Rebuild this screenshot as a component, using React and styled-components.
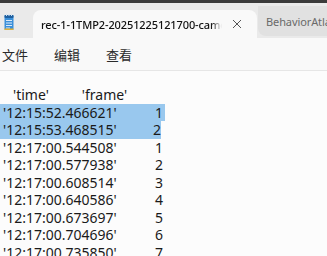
import React from 'react'
import styled, { createGlobalStyle } from 'styled-components'

const GlobalStyle = createGlobalStyle`
  html, body {
    margin: 0;
    padding: 0;
    background: #fbfbfb;
  }
  body {
    font-family: "Noto Sans", "Noto Sans CJK SC", sans-serif;
  }
`

const rows = [
  { time: "'12:15:52.466621'", frame: 1, sel: 165 },
  { time: "'12:15:53.468515'", frame: 2, sel: 161 },
  { time: "'12:17:00.544508'", frame: 1 },
  { time: "'12:17:00.577938'", frame: 2 },
  { time: "'12:17:00.608514'", frame: 3 },
  { time: "'12:17:00.640586'", frame: 4 },
  { time: "'12:17:00.673697'", frame: 5 },
  { time: "'12:17:00.704696'", frame: 6 },
  { time: "'12:17:00.735850'", frame: 7 },
]

const NotepadIcon = () => (
  <svg width="10" height="16" viewBox="0 0 10 16">
    <rect x="0.5" y="1" width="9" height="15" rx="1" fill="#3a8fd9" />
    <rect x="0.5" y="1" width="9" height="3" rx="1" fill="#1f5f9e" />
    <rect x="2" y="0" width="1" height="2" fill="#cfe3f5" />
    <rect x="4.5" y="0" width="1" height="2" fill="#cfe3f5" />
    <rect x="7" y="0" width="1" height="2" fill="#cfe3f5" />
    <rect x="2" y="6" width="6" height="1" fill="#dbeaf8" />
    <rect x="2" y="8.5" width="6" height="1" fill="#dbeaf8" />
    <rect x="2" y="11" width="6" height="1" fill="#dbeaf8" />
    <rect x="2" y="13.5" width="4" height="1" fill="#dbeaf8" />
    <rect x="0.5" y="14.5" width="9" height="1.5" fill="#e0b13a" />
  </svg>
)

export default function App() {
  return (
    <Window>
      <GlobalStyle />
      <TopStrip />
      <TitleBar>
        <IconSlot>
          <NotepadIcon />
        </IconSlot>
        <ActiveTab>
          <TabTitle>rec-1-1TMP2-20251225121700-camera</TabTitle>
          <CloseBtn>
            <svg width="10" height="10" viewBox="0 0 10 10">
              <path d="M1 1 L9 9 M9 1 L1 9" stroke="#555" strokeWidth="1" />
            </svg>
          </CloseBtn>
        </ActiveTab>
        <InactiveTab>
          <TabTitle $dim>BehaviorAtlas</TabTitle>
        </InactiveTab>
      </TitleBar>
      <MenuBar>
        <MenuItem>文件</MenuItem>
        <MenuItem>编辑</MenuItem>
        <MenuItem>查看</MenuItem>
      </MenuBar>
      <Editor>
        <HeaderLine>
          <span>'time'</span>
          <span>'frame'</span>
        </HeaderLine>
        {rows.map((r, i) => (
          <Line key={i} $sel={r.sel}>
            <TimeCell>{r.time}</TimeCell>
            <FrameCell>{r.frame}</FrameCell>
          </Line>
        ))}
      </Editor>
    </Window>
  )
}

const Window = styled.div`
  width: 327px;
  height: 256px;
  overflow: hidden;
  display: flex;
  flex-direction: column;
  background: #fbfbfb;
`

const TopStrip = styled.div`
  height: 3px;
  background: #3b3b3b;
  flex-shrink: 0;
`

const TitleBar = styled.div`
  height: 35px;
  flex-shrink: 0;
  display: flex;
  align-items: flex-end;
  background: #eaeaea;
`

const IconSlot = styled.div`
  width: 33px;
  flex-shrink: 0;
  height: 100%;
  display: flex;
  align-items: center;
  padding-left: 4px;
  padding-top: 3px;
  box-sizing: border-box;
`

const ActiveTab = styled.div`
  width: 224px;
  flex-shrink: 0;
  height: 28px;
  display: flex;
  align-items: center;
  padding: 0 15px 0 8px;
  box-sizing: border-box;
  background: #f9f9f9;
  border-radius: 8px 8px 0 0;
`

const TabTitle = styled.div`
  flex: 1;
  min-width: 0;
  overflow: hidden;
  white-space: nowrap;
  font-size: 11px;
  letter-spacing: -0.1px;
  font-weight: ${p => (p.$dim ? 400 : 500)};
  color: ${p => (p.$dim ? '#6a6a6a' : '#111')};
  mask-image: ${p => (p.$dim ? 'none' : 'linear-gradient(to right, #000 94%, transparent)')};
`

const CloseBtn = styled.div`
  width: 20px;
  flex-shrink: 0;
  display: flex;
  justify-content: flex-end;
  align-items: center;
`

const InactiveTab = styled.div`
  flex: 1;
  min-width: 0;
  height: 30px;
  align-self: flex-start;
  margin-top: 3px;
  display: flex;
  align-items: center;
  padding-left: 8px;
  margin-left: 1px;
  background: #e1e1e1;
  border-radius: 0 0 0 8px;
`

const MenuBar = styled.div`
  height: 32px;
  flex-shrink: 0;
  display: flex;
  align-items: center;
  gap: 26px;
  padding-left: 2px;
  background: #f9f9f9;
  border-bottom: 1px solid #e6e6e6;
`

const MenuItem = styled.div`
  font-family: "Noto Sans CJK SC", sans-serif;
  font-size: 13px;
  color: #2a2a2a;
`

const Editor = styled.div`
  flex: 1;
  padding-top: 15px;
  background: #fcfcfc;
  font-family: "Noto Sans", sans-serif;
  font-size: 14px;
  color: #1a1a1a;
`

const HeaderLine = styled.div`
  height: 17.5px;
  line-height: 17.5px;
  display: flex;
  gap: 33px;
  padding-left: 13px;
`

const Line = styled.div`
  height: 17.5px;
  line-height: 17.5px;
  display: flex;
  padding-left: 3px;
  box-sizing: border-box;
  width: ${p => (p.$sel ? `${p.$sel}px` : 'auto')};
  background: ${p => (p.$sel ? '#99c8ee' : 'transparent')};
`

const TimeCell = styled.div`
  width: 152px;
`

const FrameCell = styled.div``
